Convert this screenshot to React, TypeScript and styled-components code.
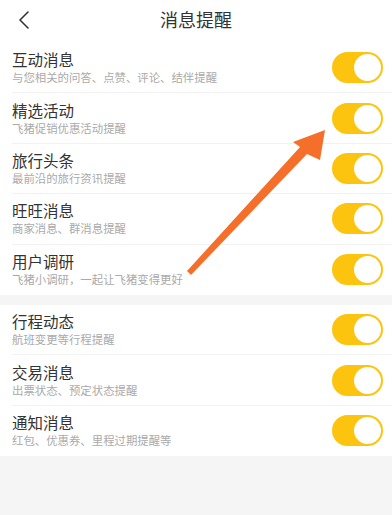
import React from "react";
import styled, { createGlobalStyle } from "styled-components";

const GlobalStyle = createGlobalStyle`
  html, body {
    margin: 0;
    padding: 0;
    background: #f5f5f5;
  }
  body {
    font-family: "Noto Sans CJK SC", "Noto Sans", sans-serif;
  }
`;

const Page = styled.div`
  position: relative;
  width: 392px;
  height: 515px;
  background: #f5f5f5;
  overflow: hidden;
`;

const Header = styled.div`
  height: 43px;
  background: #fff;
  display: flex;
  align-items: center;
  justify-content: center;
  position: relative;
`;

const BackBtn = styled.div`
  position: absolute;
  left: 14px;
  top: 9px;
  width: 20px;
  height: 22px;
  display: flex;
  align-items: center;
  justify-content: center;
`;

const Title = styled.div`
  font-size: 18px;
  color: #333;
  margin-top: -5px;
`;

const Group = styled.div<{ $gap?: boolean }>`
  background: #fff;
  margin-top: ${(p) => (p.$gap ? "10px" : "0")};
`;

const Row = styled.div<{ $last?: boolean }>`
  height: 50.4px;
  box-sizing: border-box;
  margin-left: 12px;
  padding-right: 9px;
  display: flex;
  align-items: center;
  border-bottom: ${(p) => (p.$last ? "none" : "1px solid #f2f2f2")};
`;

const Texts = styled.div`
  flex: 1;
  display: flex;
  flex-direction: column;
`;

const Name = styled.div`
  font-size: 15.5px;
  color: #333;
  line-height: 19px;
`;

const Desc = styled.div`
  font-size: 11.4px;
  color: #aaa;
  line-height: 15px;
  margin-top: 1px;
`;

const Switch = styled.div`
  width: 51px;
  height: 31px;
  border-radius: 16px;
  background: #fdc40f;
  box-sizing: border-box;
  padding: 2px;
  display: flex;
  justify-content: flex-end;
  align-items: center;
`;

const Knob = styled.div`
  width: 27px;
  height: 27px;
  border-radius: 50%;
  background: #fff;
`;

const Arrow = styled.svg`
  position: absolute;
  left: 0;
  top: 0;
  pointer-events: none;
`;

type Item = { name: string; desc: string };

const groupA: Item[] = [
  { name: "互动消息", desc: "与您相关的问答、点赞、评论、结伴提醒" },
  { name: "精选活动", desc: "飞猪促销优惠活动提醒" },
  { name: "旅行头条", desc: "最前沿的旅行资讯提醒" },
  { name: "旺旺消息", desc: "商家消息、群消息提醒" },
  { name: "用户调研", desc: "飞猪小调研，一起让飞猪变得更好" },
];

const groupB: Item[] = [
  { name: "行程动态", desc: "航班变更等行程提醒" },
  { name: "交易消息", desc: "出票状态、预定状态提醒" },
  { name: "通知消息", desc: "红包、优惠券、里程过期提醒等" },
];

function SettingRow({ item, last }: { item: Item; last?: boolean }) {
  return (
    <Row $last={last}>
      <Texts>
        <Name>{item.name}</Name>
        <Desc>{item.desc}</Desc>
      </Texts>
      <Switch>
        <Knob />
      </Switch>
    </Row>
  );
}

export default function App() {
  return (
    <Page>
      <GlobalStyle />
      <Header>
        <BackBtn>
          <svg width="12" height="18" viewBox="0 0 12 18">
            <path d="M10 1 L2 9 L10 17" fill="none" stroke="#333" strokeWidth="1.6" strokeLinecap="round" strokeLinejoin="round" />
          </svg>
        </BackBtn>
        <Title>消息提醒</Title>
      </Header>
      <Group>
        {groupA.map((it, i) => (
          <SettingRow key={it.name} item={it} last={i === groupA.length - 1} />
        ))}
      </Group>
      <Group $gap>
        {groupB.map((it, i) => (
          <SettingRow key={it.name} item={it} last={i === groupB.length - 1} />
        ))}
      </Group>
      <Arrow width="392" height="515" viewBox="0 0 392 515">
        <polygon points="187,271 191,275 307,154 320,160 325,130 293,142 300,147" fill="#f56f2b" />
      </Arrow>
    </Page>
  );
}
